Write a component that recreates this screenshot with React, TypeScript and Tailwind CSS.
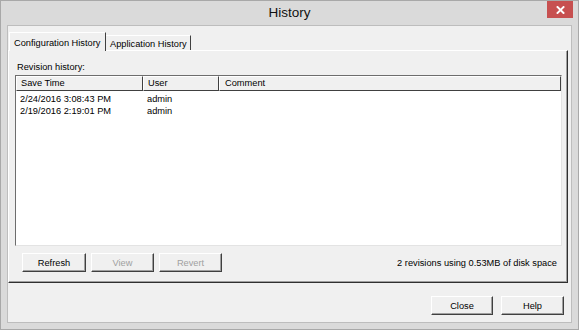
import React from "react";

const raised =
  "border border-t-white border-l-white border-r-[#404040] border-b-[#404040] shadow-[inset_-1px_-1px_0_#a0a0a0]";

function Btn({ label, w, disabled }: { label: string; w: string; disabled?: boolean }) {
  return (
    <div
      className={`${w} h-[19px] bg-[#f0f0f0] ${raised} flex items-center justify-center ${
        disabled ? "text-[#a0a0a0]" : "text-black"
      }`}
    >
      {label}
    </div>
  );
}

export default function App() {
  const rows = [
    { t: "2/24/2016 3:08:43 PM", u: "admin" },
    { t: "2/19/2016 2:19:01 PM", u: "admin" },
  ];
  return (
    <div
      className="w-[579px] h-[330px] bg-[#dadada] border border-[#a8a8a8] flex flex-col text-[9.25px] leading-[12px] text-black"
      style={{ fontFamily: "'Liberation Sans', Arial, sans-serif" }}
    >
      {/* title bar */}
      <div className="h-[24px] grid grid-cols-[1fr_auto_1fr] items-start">
        <div />
        <div className="text-[13.5px] leading-[24px] text-[#111]">History</div>
        <div className="flex justify-end pr-[5px]">
          <div className="w-[26px] h-[17px] bg-[#c75050] flex items-center justify-center">
            <svg width="9" height="8" viewBox="0 0 9 8">
              <path d="M1.5 1 L7.5 7 M7.5 1 L1.5 7" stroke="white" strokeWidth="1.9" strokeLinecap="square" />
            </svg>
          </div>
        </div>
      </div>

      {/* client */}
      <div className="mx-[6px] mb-[6px] flex-1 bg-[#f0f0f0] border border-[#bdbdbd] flex flex-col">
        {/* tabs */}
        <div className="mt-[6px] mr-[3px] flex flex-col">
          <div className="h-[18px] flex items-end pl-[1px]">
            <div className="relative z-10 -mb-[1px] w-[97px] h-[19px] bg-[#f0f0f0] border-t border-l border-r border-t-white border-l-white border-r-[#404040] flex items-start pl-[4px] pt-[4px]">
              Configuration History
            </div>
            <div className="w-[85px] h-[15px] bg-[#f0f0f0] border-t border-r border-t-white border-r-[#404040] flex items-start pl-[4px] pt-[2px]">
              Application History
            </div>
          </div>
          {/* panel */}
          <div className="h-[233px] border border-t-white border-l-white border-r-[#303030] border-b-[#303030] shadow-[inset_-1px_-1px_0_#a0a0a0] flex flex-col px-[6px]">
            <div className="pt-[10px] pl-[2px]">Revision history:</div>
            <div className="mt-[2px] w-[547px] h-[171px] bg-white border border-t-[#6d6d6d] border-l-[#6d6d6d] border-r-[#e3e3e3] border-b-[#e3e3e3] flex flex-col">
              <div className="flex h-[15px] bg-[#f0f0f0]">
                <div className="w-[127px] border border-t-white border-l-white border-r-[#404040] border-b-[#404040] pl-[4px] leading-[13px]">
                  Save Time
                </div>
                <div className="w-[76px] border border-t-white border-l-white border-r-[#404040] border-b-[#404040] pl-[4px] leading-[13px]">
                  User
                </div>
                <div className="flex-1 border border-t-white border-l-white border-r-[#404040] border-b-[#404040] pl-[5px] leading-[13px]">
                  Comment
                </div>
              </div>
              <div className="pt-[2px] flex flex-col">
                {rows.map((r) => (
                  <div key={r.t} className="flex h-[12px]">
                    <div className="w-[127px] pl-[4px]">{r.t}</div>
                    <div className="w-[76px] pl-[4px]">{r.u}</div>
                  </div>
                ))}
              </div>
            </div>
            <div className="mt-[7px] flex items-center pl-[7px] pr-[4px]">
              <div className="flex gap-[5px]">
                <Btn label="Refresh" w="w-[64px]" />
                <Btn label="View" w="w-[63px]" disabled />
                <Btn label="Revert" w="w-[63px]" disabled />
              </div>
              <div className="flex-1 text-right">2 revisions using 0.53MB of disk space</div>
            </div>
          </div>
        </div>
        {/* bottom buttons */}
        <div className="mt-[13px] flex justify-end gap-[8px] pr-[7px]">
          <Btn label="Close" w="w-[62px]" />
          <Btn label="Help" w="w-[63px]" />
        </div>
      </div>
    </div>
  );
}
